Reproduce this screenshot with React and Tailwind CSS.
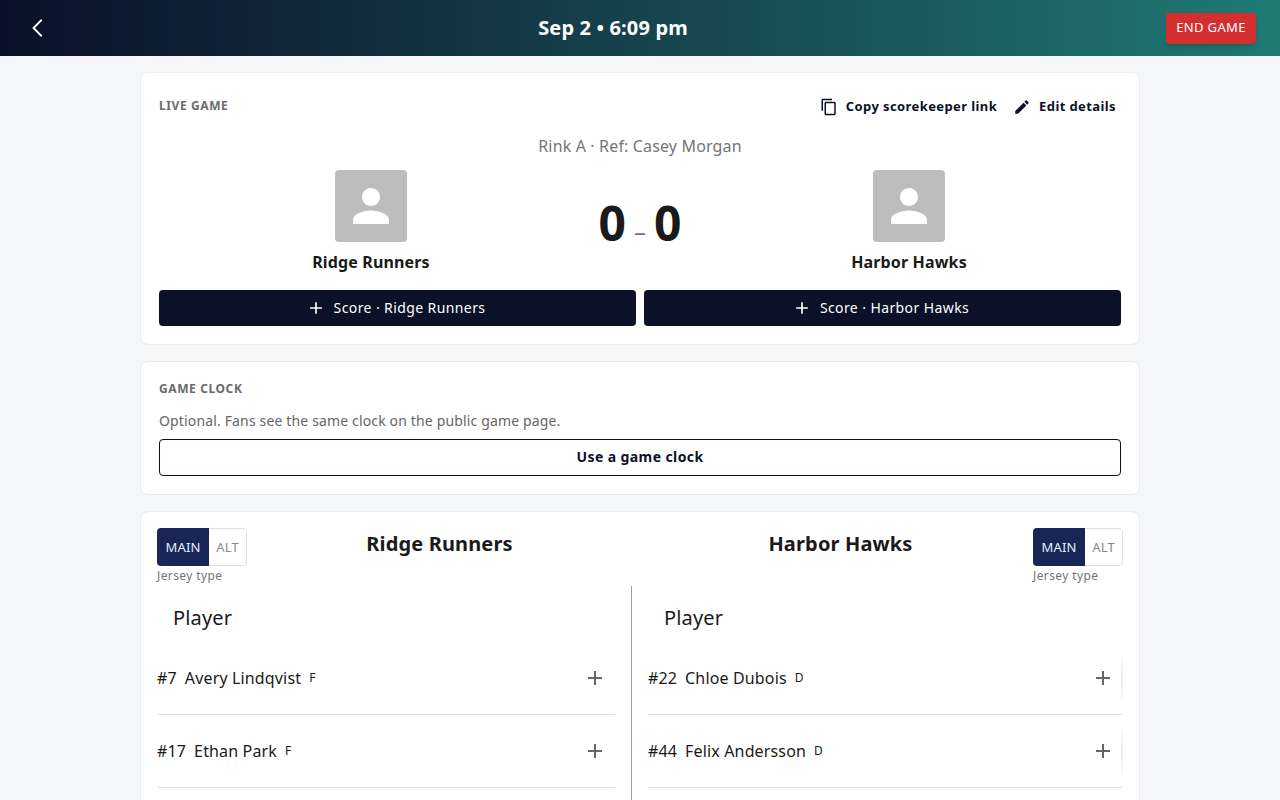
import React from 'react';

const Icon = ({ d, className }) => (
  <svg viewBox="0 0 24 24" fill="currentColor" className={className}>
    <path d={d} />
  </svg>
);

const PLUS = 'M19 13h-6v6h-2v-6H5v-2h6V5h2v6h6v2z';
const COPY = 'M16 1H4c-1.1 0-2 .9-2 2v14h2V3h12V1zm3 4H8c-1.1 0-2 .9-2 2v14c0 1.1.9 2 2 2h11c1.1 0 2-.9 2-2V7c0-1.1-.9-2-2-2zm0 16H8V7h11v14z';
const EDIT = 'M3 17.25V21h3.75L17.81 9.94l-3.75-3.75L3 17.25zM20.71 7.04c.39-.39.39-1.02 0-1.41l-2.34-2.34a.9959.9959 0 0 0-1.41 0l-1.83 1.83 3.75 3.75 1.83-1.83z';
const PERSON = 'M12 12c2.21 0 4-1.79 4-4s-1.79-4-4-4-4 1.79-4 4 1.79 4 4 4zm0 2c-2.67 0-8 1.34-8 4v2h16v-2c0-2.66-5.33-4-8-4z';

const Team = ({ name }) => (
  <div className="flex flex-col items-center">
    <div className="w-[72px] h-[72px] rounded bg-[#bdbdbd] flex items-center justify-center text-white">
      <Icon d={PERSON} className="w-[54px] h-[54px]" />
    </div>
    <div className="mt-[9px] text-base leading-[22px] font-bold tracking-[0.15px] text-[#1a1a1a]">{name}</div>
  </div>
);

const ScoreButton = ({ name }) => (
  <button className="flex-1 h-9 pr-1 rounded bg-[#0a1128] text-white text-sm tracking-[0.4px] flex items-center justify-center gap-2">
    <Icon d={PLUS} className="w-5 h-5" />
    <span>Score · {name}</span>
  </button>
);

const JerseyToggle = () => (
  <div>
    <div className="flex w-[90px] h-[38px] rounded border border-[#e0e0e0] text-[13px] tracking-[0.2px]">
      <div className="w-[52px] -m-px mr-0 pt-px rounded-l bg-[#1a2557] text-[#e3f0fb] flex items-center justify-center">MAIN</div>
      <div className="flex-1 pt-px text-[#8a8a8a] flex items-center justify-center">ALT</div>
    </div>
    <div className="mt-[2px] text-xs leading-4 tracking-[0.4px] text-[#757575]">Jersey type</div>
  </div>
);

const PlayerRow = ({ number, name, pos, edge }) => (
  <div className="relative h-[73px] border-b border-[#e0e0e0] flex items-center">
    <span className="text-base tracking-[0.15px] text-[#1a1a1a]">#{number}</span>
    <span className="ml-2 text-base tracking-[0.15px] text-[#1a1a1a]">{name}</span>
    <span className="ml-2 text-xs tracking-[0.4px] text-[#1a1a1a]">{pos}</span>
    <Icon d={PLUS} className="w-6 h-6 text-[#666666] absolute top-6 right-2" />
    {edge && <div className="absolute right-0 top-4 w-[2px] h-[42px] bg-gradient-to-b from-[#f8f8f8] via-[#ececec] to-[#f8f8f8]" />}
  </div>
);

export default function App() {
  return (
    <div className="h-[800px] overflow-hidden bg-[#f4f6f8] font-['Noto_Sans',sans-serif]">
      <header className="h-14 bg-gradient-to-r from-[#0a1029] to-[#1f7a74] flex items-center justify-between pl-7 pr-6 relative">
        <svg viewBox="0 0 24 24" fill="none" stroke="white" strokeWidth="2" className="w-[22px] h-[22px]">
          <path d="M15 3 L6 12 L15 21" />
        </svg>
        <div className="absolute left-0 right-[54px] text-center text-xl font-bold tracking-[0.15px] text-white">Sep 2 • 6:09 pm</div>
        <button className="h-[31px] w-[90px] rounded bg-[#d32f2f] text-white text-[13px] tracking-[0.37px] shadow-md">END GAME</button>
      </header>

      <main className="w-[1000px] mx-auto pt-4 flex flex-col gap-4">
        <section className="h-[273px] bg-white border border-[#e8eaed] rounded-lg px-[18px] pt-[18px]">
          <div className="flex items-center justify-between h-8">
            <div className="mb-[2px] text-xs font-bold tracking-[0.6px] text-[#6b6b6b]">LIVE GAME</div>
            <div className="flex items-center gap-[16px] pr-[5px] text-[13px] font-bold text-[#0a1128] tracking-[0.4px]">
              <button className="flex items-center gap-2"><Icon d={COPY} className="w-[18px] h-[18px]" />Copy scorekeeper link</button>
              <button className="flex items-center gap-2"><Icon d={EDIT} className="w-[18px] h-[18px]" />Edit details</button>
            </div>
          </div>
          <div className="mt-[11px] text-center text-base leading-6 tracking-[0.15px] text-[#757575]">Rink A · Ref: Casey Morgan</div>
          <div className="mt-3 flex">
            <div className="flex-1 flex justify-center"><Team name="Ridge Runners" /></div>
            <div className="w-[114px] h-[104px] flex items-center justify-center gap-2 pt-[1px] text-[#1a1a1a]">
              <span className="text-5xl font-bold">0</span>
              <span className="text-2xl text-[#757575] mt-4">–</span>
              <span className="text-5xl font-bold">0</span>
            </div>
            <div className="flex-1 flex justify-center"><Team name="Harbor Hawks" /></div>
          </div>
          <div className="mt-[16px] flex gap-2">
            <ScoreButton name="Ridge Runners" />
            <ScoreButton name="Harbor Hawks" />
          </div>
        </section>

        <section className="h-[134px] bg-white border border-[#e8eaed] rounded-lg px-[18px] pt-[17px]">
          <div className="h-5 flex items-center text-xs font-bold tracking-[0.6px] text-[#6b6b6b]">GAME CLOCK</div>
          <div className="mt-[12px] text-sm leading-5 tracking-[0.15px] text-[#666666]">Optional. Fans see the same clock on the public game page.</div>
          <button className="mt-2 pb-[2px] w-full h-[37px] rounded border border-[#0a1128] text-sm font-bold tracking-[0.4px] text-[#0a1128]">Use a game clock</button>
        </section>

        <section className="bg-white border border-[#e8eaed] rounded-lg px-[16px] pt-4 h-[400px]">
          <div className="flex justify-between h-[58px]">
            <JerseyToggle />
            <div className="flex-1 flex">
              <div className="w-[385px] text-center text-xl font-bold leading-8 tracking-[0.15px] text-[#1a1a1a]">Ridge Runners</div>
              <div className="flex-1 pl-4 text-center text-xl font-bold leading-8 tracking-[0.15px] text-[#1a1a1a]">Harbor Hawks</div>
            </div>
            <JerseyToggle />
          </div>
          <div className="flex">
            <div className="w-[475px] border-r border-[#9e9e9e] pr-4 h-[300px]">
              <div className="h-[56px] pl-4 pt-2 flex items-center text-xl tracking-[0.15px] text-[#1a1a1a]">Player</div>
              <PlayerRow number="7" name="Avery Lindqvist" pos="F" />
              <PlayerRow number="17" name="Ethan Park" pos="F" />
            </div>
            <div className="flex-1 pl-4">
              <div className="h-[56px] pl-4 pt-2 flex items-center text-xl tracking-[0.15px] text-[#1a1a1a]">Player</div>
              <PlayerRow number="22" name="Chloe Dubois" pos="D" edge />
              <PlayerRow number="44" name="Felix Andersson" pos="D" edge />
            </div>
          </div>
        </section>
      </main>
    </div>
  );
}
